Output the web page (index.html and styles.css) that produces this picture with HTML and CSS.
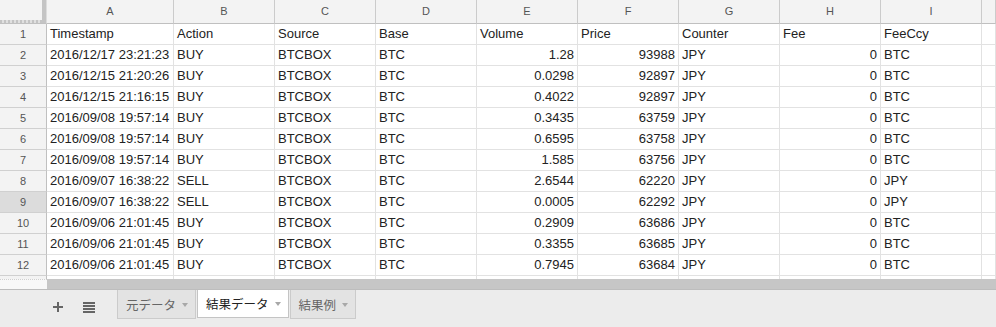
FILE: index.html
```html
<!DOCTYPE html>
<html lang="ja">
<head>
  <meta charset="UTF-8">
  <meta name="viewport" content="width=device-width, initial-scale=1.0">
  <title>Trades - Sheet</title>
  <link rel="stylesheet" href="styles.css">
</head>
<body>
  <div class="sheet">
    <div class="grid" id="grid">
      <div class="row col-heads">
        <div class="corner"></div>
        <div class="col-head">A</div>
        <div class="col-head">B</div>
        <div class="col-head">C</div>
        <div class="col-head">D</div>
        <div class="col-head">E</div>
        <div class="col-head">F</div>
        <div class="col-head">G</div>
        <div class="col-head">H</div>
        <div class="col-head">I</div>
        <div class="col-head"></div>
      </div>
    </div>
    <div class="hscroll">
      <div class="hscroll-frozen"></div>
      <div class="hscroll-thumb"></div>
    </div>
  </div>

  <div class="tabbar">
    <button class="tool-btn" title="Add sheet">
      <svg width="10" height="10" viewBox="0 0 10 10"><path d="M4 0h2v4h4v2H6v4H4V6H0V4h4z" fill="#666"/></svg>
    </button>
    <button class="tool-btn" title="All sheets">
      <svg width="12" height="11" viewBox="0 0 12 11"><path d="M0 0h12v2H0zM0 3h12v2H0zM0 6h12v2H0zM0 9h12v2H0z" fill="#666"/></svg>
    </button>
    <div class="tabs">
      <div class="tab"><span>元データ</span><span class="caret"></span></div>
      <div class="tab active"><span>結果データ</span><span class="caret"></span></div>
      <div class="tab"><span>結果例</span><span class="caret"></span></div>
    </div>
  </div>

  <script>
    const rows = [
      ["Timestamp", "Action", "Source", "Base", "Volume", "Price", "Counter", "Fee", "FeeCcy"],
      ["2016/12/17 23:21:23", "BUY", "BTCBOX", "BTC", 1.28, 93988, "JPY", 0, "BTC"],
      ["2016/12/15 21:20:26", "BUY", "BTCBOX", "BTC", 0.0298, 92897, "JPY", 0, "BTC"],
      ["2016/12/15 21:16:15", "BUY", "BTCBOX", "BTC", 0.4022, 92897, "JPY", 0, "BTC"],
      ["2016/09/08 19:57:14", "BUY", "BTCBOX", "BTC", 0.3435, 63759, "JPY", 0, "BTC"],
      ["2016/09/08 19:57:14", "BUY", "BTCBOX", "BTC", 0.6595, 63758, "JPY", 0, "BTC"],
      ["2016/09/08 19:57:14", "BUY", "BTCBOX", "BTC", 1.585, 63756, "JPY", 0, "BTC"],
      ["2016/09/07 16:38:22", "SELL", "BTCBOX", "BTC", 2.6544, 62220, "JPY", 0, "JPY"],
      ["2016/09/07 16:38:22", "SELL", "BTCBOX", "BTC", 0.0005, 62292, "JPY", 0, "JPY"],
      ["2016/09/06 21:01:45", "BUY", "BTCBOX", "BTC", 0.2909, 63686, "JPY", 0, "BTC"],
      ["2016/09/06 21:01:45", "BUY", "BTCBOX", "BTC", 0.3355, 63685, "JPY", 0, "BTC"],
      ["2016/09/06 21:01:45", "BUY", "BTCBOX", "BTC", 0.7945, 63684, "JPY", 0, "BTC"]
    ];
    const selectedRow = 9;
    const grid = document.getElementById("grid");

    function makeCell(cls, text) {
      const div = document.createElement("div");
      div.className = cls;
      div.textContent = text;
      return div;
    }

    rows.forEach((values, i) => {
      const row = document.createElement("div");
      row.className = "row";
      const num = i + 1;
      row.appendChild(makeCell(num === selectedRow ? "row-head selected" : "row-head", num));
      values.forEach((v) => {
        row.appendChild(makeCell(typeof v === "number" ? "cell num" : "cell", v));
      });
      row.appendChild(makeCell("cell", ""));
      grid.appendChild(row);
    });

    // the partly visible row 13
    const last = document.createElement("div");
    last.className = "row partial";
    last.appendChild(makeCell("row-head", ""));
    for (let c = 0; c < 10; c++) last.appendChild(makeCell("cell", ""));
    grid.appendChild(last);
  </script>
</body>
</html>
```

FILE: styles.css
```css
/* General */
* {
  box-sizing: border-box;
}

body {
  margin: 0;
  width: 996px;
  height: 327px;
  overflow: hidden;
  font-family: "Liberation Sans", Arial, "Noto Sans CJK JP", sans-serif;
  color: #222;
  background: #fff;
}

/* Grid */
.row {
  display: grid;
  grid-template-columns: 47px 127px repeat(8, 101px) 1fr;
  height: 21px;
}

.row.col-heads {
  height: 24px;
}

.row.partial {
  height: 3px;
}

.corner {
  position: relative;
  background: #f3f3f3;
  border-right: 1px solid #dcdcdc;
  border-bottom: 1px solid #c0c0c0;
}

.corner::before {
  content: "";
  position: absolute;
  top: 0;
  right: 0;
  width: 4px;
  height: 23px;
  background: #c4c4c4;
}

.corner::after {
  content: "";
  position: absolute;
  left: 0;
  right: 4px;
  top: 20px;
  height: 3px;
  background: repeating-linear-gradient(90deg, #c4c4c4 0 2px, #e0e0e0 2px 4px);
}

.col-head {
  background: #f3f3f3;
  border-right: 1px solid #cbcbcb;
  border-bottom: 1px solid #c0c0c0;
  color: #555;
  font-size: 11px;
  line-height: 23px;
  text-align: center;
}

.row-head {
  background: #f3f3f3;
  border-right: 1px solid #c0c0c0;
  border-bottom: 1px solid #d0d0d0;
  color: #555;
  font-size: 11px;
  line-height: 20px;
  text-align: center;
}

.row-head.selected {
  background: #dcdcdc;
}

.cell {
  border-right: 1px solid #e2e2e2;
  border-bottom: 1px solid #e2e2e2;
  padding: 0 3px;
  font-size: 13px;
  line-height: 20px;
  white-space: nowrap;
  overflow: hidden;
}

.cell.num {
  text-align: right;
}

.partial .cell,
.partial .row-head {
  border-bottom: none;
}

/* Horizontal scrollbar */
.hscroll {
  display: flex;
  height: 10px;
}

.hscroll-frozen {
  width: 47px;
  background: #f8f8f8;
  border-top: 1px dotted #d0d0d0;
}

.hscroll-thumb {
  flex: 1;
  background: #c6c6c6;
}

/* Sheet tabs */
.tabbar {
  display: flex;
  align-items: flex-start;
  height: 38px;
  padding-left: 42px;
  background: #ececec;
  border-top: 1px solid #bdbdbd;
}

.tool-btn {
  width: 31px;
  height: 34px;
  padding: 0;
  border: none;
  background: none;
  display: flex;
  align-items: center;
  justify-content: center;
}

.tabs {
  display: flex;
  gap: 1px;
  margin-left: 13px;
}

.tab {
  height: 29px;
  padding: 0 7px 0 8px;
  display: flex;
  align-items: center;
  gap: 6px;
  background: #e3e3e3;
  border: 1px solid #cbcbcb;
  border-top: none;
  color: #666;
  font-size: 12.5px;
  white-space: nowrap;
}

.tab.active {
  background: #fff;
  color: #222;
  border-color: #c4c4c4;
  height: 28px;
}

.caret {
  width: 0;
  height: 0;
  border-left: 3.5px solid transparent;
  border-right: 3.5px solid transparent;
  border-top: 4px solid #a8a8a8;
  margin-top: 1px;
}
```
